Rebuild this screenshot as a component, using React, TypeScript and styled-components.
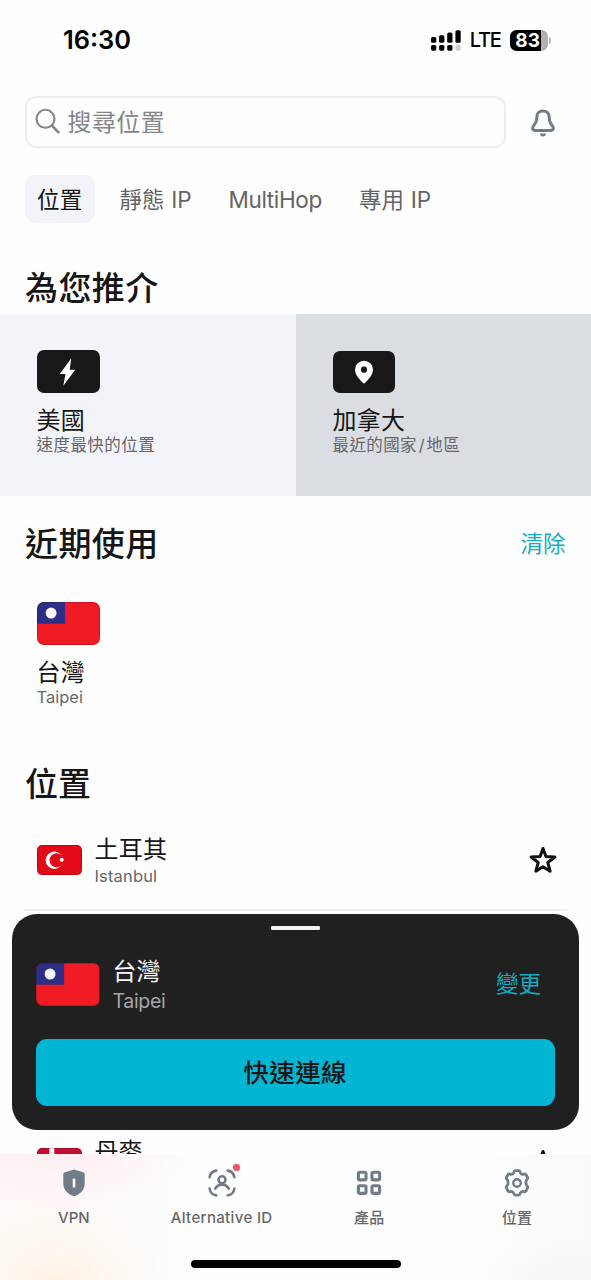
import React from "react";
import styled, { createGlobalStyle } from "styled-components";

const GlobalStyle = createGlobalStyle`
  * { box-sizing: border-box; }
  html, body { margin: 0; background: #fefefe; }
  body { font-family: Inter, "Noto Sans CJK TC", sans-serif; color: #161616; }
`;

const Screen = styled.div`
  position: relative;
  display: flex;
  flex-direction: column;
  width: 591px;
  height: 1280px;
  overflow: hidden;
  background: #fefefe;
`;

const Text = styled.span<{
  $size: number; $line: number; $color?: string; $weight?: number; $track?: number;
}>`
  display: block;
  white-space: nowrap;
  font-size: ${(p) => p.$size}px;
  line-height: ${(p) => p.$line}px;
  color: ${(p) => p.$color ?? "#161616"};
  font-weight: ${(p) => p.$weight ?? 400};
  letter-spacing: ${(p) => p.$track ?? 0}px;
`;

const Slash = styled.span`
  margin: 0 1.3px 0 1.7px;
`;

const StatusBar = styled.header`
  display: flex;
  align-items: center;
  justify-content: space-between;
  height: 80px;
  flex: none;
  padding: 0 40px 0 63px;
`;

const StatusGroup = styled.div`
  display: flex;
  align-items: center;
`;

const Battery = styled.div`
  display: flex;
  align-items: center;
  margin-left: 9px;
`;

const BatteryBody = styled.div`
  display: flex;
  align-items: center;
  justify-content: flex-end;
  width: 38px;
  height: 21px;
  padding-right: 7.5px;
  border-radius: 6.5px;
  background: linear-gradient(90deg, #000 0 31px, #b1b1b1 31px);
`;

const BatteryTip = styled.div`
  width: 2.5px;
  height: 7px;
  margin-left: 1px;
  border-radius: 0 3px 3px 0;
  background: #b8b8b8;
`;

const SearchRow = styled.div`
  display: flex;
  align-items: center;
  flex: none;
  height: 52px;
  margin: 16px 0 27px;
  padding: 0 34px 0 24.5px;
  justify-content: space-between;
  > svg { margin-top: 1px; }
`;

const SearchBox = styled.div`
  display: flex;
  align-items: center;
  gap: 7px;
  width: 481.5px;
  height: 52px;
  padding-left: 8px;
  border: 2px solid #eceef1;
  border-radius: 11px;
  > svg { margin-top: -2px; }
  > span { padding-top: 2px; }
`;

const Filters = styled.nav`
  display: flex;
  flex: none;
  height: 48px;
  padding-left: 25px;
`;

const FilterSlot = styled.div<{ $width: number }>`
  display: flex;
  width: ${(p) => p.$width}px;
`;

const Filter = styled.div<{ $active?: boolean; $width: number }>`
  display: flex;
  align-items: center;
  width: ${(p) => p.$width}px;
  padding-left: 12px;
  border-radius: 11px;
  background: ${(p) => (p.$active ? "#f3f4f9" : "transparent")};
`;

const SectionHead = styled.div<{ $height: number; $top: number }>`
  display: flex;
  flex: none;
  align-items: flex-start;
  justify-content: space-between;
  height: ${(p) => p.$height}px;
  padding: ${(p) => p.$top}px 25.5px 0 25px;
`;

const Suggestions = styled.div`
  display: grid;
  grid-template-columns: 295.5px 1fr;
  flex: none;
  height: 182px;
`;

const Suggestion = styled.div<{ $pressed?: boolean }>`
  padding: 36px 0 0 ${(p) => (p.$pressed ? 37 : 36.5)}px;
  background: ${(p) => (p.$pressed ? "#dadde2" : "#f3f4f9")};
`;

const IconTile = styled.div<{ $small?: boolean }>`
  display: flex;
  align-items: center;
  justify-content: center;
  width: ${(p) => (p.$small ? 62.5 : 63.5)}px;
  height: ${(p) => (p.$small ? 41.5 : 43)}px;
  margin: ${(p) => (p.$small ? "1px 0 13.5px" : "0 0 13px")};
  border-radius: 7px;
  background: #181818;
`;

const Recent = styled.div`
  display: flex;
  flex-direction: column;
  flex: none;
  height: 164px;
  padding: 12px 0 0 36.5px;
`;

const FlagFrame = styled.div<{ $w: number; $h: number; $gap?: number }>`
  flex: none;
  width: ${(p) => p.$w}px;
  height: ${(p) => p.$h}px;
  margin-bottom: ${(p) => p.$gap ?? 0}px;
  border-radius: ${(p) => (p.$w > 50 ? 7 : 5)}px;
  overflow: hidden;
  position: relative;
  svg { display: block; width: 100%; height: 100%; }
  &::after {
    content: "";
    position: absolute;
    inset: 0;
    border: 1.5px solid rgba(40, 0, 0, 0.2);
    border-radius: inherit;
  }
`;

const LocationRow = styled.div<{ $rule?: boolean }>`
  display: flex;
  flex: none;
  align-items: center;
  height: 101px;
  margin: 0 24px;
  padding: 1px 10px 0 12.5px;
  border-bottom: 2px solid ${(p) => (p.$rule ? "#edeef1" : "transparent")};
`;

const Names = styled.div<{ $gap: number; $drop?: number }>`
  flex: 1;
  margin-left: ${(p) => p.$gap}px;
  padding-top: ${(p) => p.$drop ?? 0}px;
`;

const CoveredRows = styled.div`
  flex: none;
  height: 202px;
`;

const ConnectSheet = styled.section`
  position: absolute;
  left: 12.4px;
  top: 914px;
  width: 566.6px;
  height: 216px;
  padding: 12px 24px 24px;
  border-radius: 25px;
  background: #202020;
  display: flex;
  flex-direction: column;
`;

const Handle = styled.div`
  align-self: center;
  width: 49px;
  height: 3.5px;
  border-radius: 1px;
  background: #f0f1f5;
`;

const SheetTarget = styled.div`
  display: flex;
  align-items: center;
  height: 109.5px;
  padding: 0 14px 0 0;
`;

const ConnectButton = styled.div`
  display: flex;
  align-items: center;
  justify-content: center;
  flex: none;
  width: 518.5px;
  height: 66.5px;
  padding: 1px 1px 0 0;
  border-radius: 11px;
  background: #02b5d2;
`;

const TabBar = styled.footer`
  position: absolute;
  left: 0;
  bottom: 0;
  width: 591px;
  height: 126px;
  display: flex;
  flex-direction: column;
  align-items: center;
  background:
    radial-gradient(circle at 58px 150px, rgba(252, 235, 212, 0.9), rgba(255, 244, 232, 0.5) 55px, transparent 115px),
    radial-gradient(ellipse 130px 60px at 62px 0, rgba(255, 234, 239, 0.75), transparent),
    radial-gradient(circle at 555px 160px, #f5f5f5, transparent 85px),
    linear-gradient(90deg, #fffaf9 0, #fdfcfc 150px, #fefefe 240px, #fefefe 450px, #fafafa 100%);
`;

const Tabs = styled.div`
  display: grid;
  grid-template-columns: repeat(4, 1fr);
  width: 591px;
  height: 106px;
`;

const Tab = styled.div`
  display: flex;
  flex-direction: column;
  align-items: center;
  padding-top: 13px;
  svg { display: block; margin-bottom: 8.5px; }
`;

const TabIcon = styled.div`
  position: relative;
`;

const Badge = styled.i`
  position: absolute;
  top: -3px;
  right: -3px;
  width: 6.5px;
  height: 6.5px;
  border-radius: 50%;
  background: #f5566d;
`;

const HomeIndicator = styled.div`
  width: 210.5px;
  height: 8px;
  margin-left: 1px;
  border-radius: 4px;
  background: #000;
`;

const SLATE = "#717c89";

const SignalMark = styled.svg`
  margin-right: 8.5px;
`;

const Signal = () => (
  <SignalMark width="30" height="21" viewBox="0 0 30 21">
    <rect x="0" y="7" width="5.3" height="5.8" rx="1.6" />
    <rect x="8.1" y="5.2" width="5.3" height="7.6" rx="1.6" />
    <rect x="16.2" y="2.4" width="5.3" height="10.4" rx="1.6" />
    <rect x="24.4" y="0.2" width="5.3" height="12.6" rx="1.6" />
    <rect x="0" y="15" width="5.3" height="5.7" rx="1.6" />
    <rect x="8.1" y="15" width="5.3" height="5.7" rx="1.6" />
    <rect x="16.2" y="15" width="5.3" height="5.7" rx="1.6" />
    <rect x="24.4" y="15" width="5.3" height="5.7" rx="1.6" fill="#cfcfcf" />
  </SignalMark>
);

const SearchIcon = () => (
  <svg width="26" height="26" viewBox="0 0 26 26" fill="none" stroke="#85868b" strokeWidth="2.1" strokeLinecap="round">
    <circle cx="10.5" cy="10.8" r="9" />
    <path d="M17 17.5L23.4 24.3" strokeWidth="2.6" />
  </svg>
);

const BellIcon = () => (
  <svg width="28" height="30" viewBox="0 0 28 30" fill="none">
    <path
      d="M14 3c-3.800 0-6.100 2.500-6.100 5.700 0 3.600-.7 5.700-2.500 8-1.300 1.600-1.800 2.300-1.800 3.400 0 1.500 1 2.300 2.500 2.300h15.800c1.500 0 2.500-.8 2.500-2.300 0-1.100-.5-1.800-1.800-3.400-1.800-2.300-2.500-4.400-2.500-8C20.100 5.500 17.800 3 14 3z"
      stroke={SLATE} strokeWidth="3" strokeLinejoin="round"
    />
    <path d="M11 25.400h6c0 1.900-1.200 3-3 3s-3-1.100-3-3z" fill={SLATE} />
  </svg>
);

const BoltIcon = () => (
  <svg width="18" height="30" viewBox="0 0 18 30">
    <path d="M12.3 1.2L.8 17h5.7L4.3 28.8 16.3 12.8h-5.6z" fill="#fff" />
  </svg>
);

const PinIcon = () => (
  <svg width="20" height="24" viewBox="0 0 20 24">
    <path
      d="M10 .7a9 9 0 0 1 9 9c0 5-4.6 9.700-7.800 13a1.600 1.600 0 0 1-2.400 0C5.600 19.400 1 14.700 1 9.700a9 9 0 0 1 9-9zm0 5.900a3.100 3.100 0 1 0 0 6.200 3.100 3.100 0 0 0 0-6.200z"
      fill="#fff" fillRule="evenodd"
    />
  </svg>
);

const StarIcon = () => (
  <svg width="28" height="28" viewBox="0 0 28 28" fill="none" stroke="#111" strokeWidth="3" strokeLinejoin="round">
    <path d="M14 2.500l2.900 8 9 .5-7.100 5.500 2.300 8.700L14 20.800l-7.100 4.400 2.300-8.700L2.100 11l9-.5z" />
  </svg>
);

const TaiwanFlag = () => (
  <svg viewBox="0 0 64 43" preserveAspectRatio="none">
    <rect width="64" height="43" fill="#ef1c25" />
    <rect width="28.3" height="21.7" fill="#2c2e87" />
    <circle cx="14.2" cy="11.1" r="5.5" fill="#f7f7fa" />
  </svg>
);

const TurkeyFlag = () => (
  <svg viewBox="0 0 46 31" preserveAspectRatio="none">
    <rect width="46" height="31" fill="#e30a17" />
    <circle cx="17.5" cy="15.5" r="8.8" fill="#fff" />
    <circle cx="19.8" cy="15.5" r="7.1" fill="#e30a17" />
    <circle cx="25" cy="15" r="2" fill="#fff" />
  </svg>
);

const DenmarkFlag = () => (
  <svg viewBox="0 0 46 31" preserveAspectRatio="none">
    <rect width="46" height="31" fill="#c60c30" />
    <path d="M12.500 0h5v31h-5zM0 13h46v5H0z" fill="#fff" />
  </svg>
);

const ShieldIcon = () => (
  <svg width="30" height="32" viewBox="0 0 30 32">
    <path d="M15 2.600l9 2.600c1.200.4 1.700 1.100 1.700 2.200v9c0 5.500-3.500 10-9.800 12.500a2.400 2.400 0 0 1-1.800 0C7.800 26.400 4.300 21.900 4.300 16.400v-9c0-1.100.5-1.800 1.700-2.200z" fill={SLATE} />
    <rect x="13.700" y="11.600" width="2.600" height="8.800" rx="1" fill="#fff" />
  </svg>
);

const IdIcon = () => (
  <svg width="30" height="32" viewBox="0 0 30 32" fill="none" stroke={SLATE} strokeWidth="2.600" strokeLinecap="round">
    <path d="M2.600 10.200C3.200 6.600 5.400 4.200 9.200 3.600M20.800 3.600c3.800.6 6 3 6.600 6.600M27.400 21.600c-.6 3.800-2.800 6.200-6.600 6.800M9.200 28.400c-3.800-.6-6-3-6.600-6.800" />
    <circle cx="15" cy="12.800" r="3.500" />
    <path d="M8.200 21.700c1.500-2.700 3.900-4.100 6.800-4.100s5.300 1.400 6.800 4.100" />
  </svg>
);

const GridIcon = () => (
  <svg width="30" height="32" viewBox="0 0 30 32" fill="none" stroke={SLATE} strokeWidth="3.100">
    <rect x="4.400" y="5.300" width="7.600" height="7.600" rx="1.300" />
    <rect x="18" y="5.300" width="7.600" height="7.600" rx="1.300" />
    <rect x="4.400" y="18.800" width="7.600" height="7.600" rx="1.300" />
    <rect x="18" y="18.800" width="7.600" height="7.600" rx="1.300" />
  </svg>
);

const GearIcon = () => (
  <svg width="30" height="32" viewBox="0 0 30 32" fill="none" stroke={SLATE} strokeWidth="2.800" strokeLinejoin="round">
    <path d="M13.400 3.700h3.200c.9 0 1.300.4 1.500 1.300.4 1.900 1.900 2.700 3.700 2.100 1-.3 1.700-.2 2.200.6l1.500 2.500c.5.800.3 1.400-.4 2.100-1.600 1.400-1.600 5.200 0 6.600.7.700.9 1.300.4 2.100L24 24.100c-.5.800-1.200.9-2.200.6-1.800-.6-3.300.3-3.700 2.100-.2.900-.6 1.300-1.500 1.300h-3.200c-.9 0-1.300-.4-1.500-1.300-.4-1.800-1.900-2.700-3.700-2.100-1 .3-1.700.2-2.200-.6L4.500 21c-.5-.8-.3-1.400.4-2.100 1.600-1.400 1.600-5.200 0-6.600-.7-.7-.9-1.300-.4-2.100L6 7.700c.5-.8 1.200-.9 2.200-.6 1.800.6 3.300-.2 3.700-2.100.2-.9.600-1.300 1.500-1.300z" />
    <circle cx="15" cy="16" r="3.700" strokeWidth="2.400" />
  </svg>
);

const filters = [
  { label: "位置", width: 82.5, track: 0.3 },
  { label: "靜態 IP", width: 109, track: 0.1 },
  { label: "MultiHop", width: 130.5, track: -0.35 },
  { label: "專用 IP", width: 96, track: 0.1 },
];

const tabs = [
  { label: "VPN", icon: <ShieldIcon />, track: 0 },
  { label: "Alternative ID", icon: <IdIcon />, track: 0.35, badge: true },
  { label: "產品", icon: <GridIcon />, track: 0.3 },
  { label: "位置", icon: <GearIcon />, track: 0.3 },
];

export default function App() {
  return (
    <Screen>
      <GlobalStyle />
      <StatusBar>
        <Text $size={25.4} $line={30} $weight={600} $color="#000">16:30</Text>
        <StatusGroup>
          <Signal />
          <Text $size={20} $line={22} $weight={500} $color="#000" $track={-1.3}>LTE</Text>
          <Battery>
            <BatteryBody>
              <Text $size={19} $line={21} $weight={700} $color="#fff">83</Text>
            </BatteryBody>
            <BatteryTip />
          </Battery>
        </StatusGroup>
      </StatusBar>

      <SearchRow>
        <SearchBox>
          <SearchIcon />
          <Text $size={24} $line={32} $color="#85868b" $track={0.4}>搜尋位置</Text>
        </SearchBox>
        <BellIcon />
      </SearchRow>

      <Filters>
        {filters.map((f, i) => (
          <FilterSlot key={f.label} $width={f.width}>
            <Filter $active={i === 0} $width={i === 0 ? 70 : f.width}>
              <Text $size={22.5} $line={31} $color={i === 0 ? "#161616" : "#636467"} $track={f.track}>
                {f.label}
              </Text>
            </Filter>
          </FilterSlot>
        ))}
      </Filters>

      <SectionHead $height={91} $top={43}>
        <Text $size={33} $line={44} $weight={500} $track={0.4}>為您推介</Text>
      </SectionHead>
      <Suggestions>
        <Suggestion>
          <IconTile><BoltIcon /></IconTile>
          <Text $size={24} $line={29} $track={0.3}>美國</Text>
          <Text $size={16.5} $line={21} $color="#66676a" $track={0.45}>速度最快的位置</Text>
        </Suggestion>
        <Suggestion $pressed>
          <IconTile $small><PinIcon /></IconTile>
          <Text $size={24} $line={29} $track={0.3}>加拿大</Text>
          <Text $size={16.5} $line={21} $color="#66676a" $track={0.4}>
            最近的國家<Slash>/</Slash>地區
          </Text>
        </Suggestion>
      </Suggestions>

      <SectionHead $height={94} $top={26}>
        <Text $size={33} $line={44} $weight={500} $track={0.4}>近期使用</Text>
        <Text $size={22.5} $line={44} $color="#15abc3">清除</Text>
      </SectionHead>
      <Recent>
        <FlagFrame $w={63.5} $h={43} $gap={13}><TaiwanFlag /></FlagFrame>
        <Text $size={24} $line={29} $track={0.2}>台灣</Text>
        <Text $size={16.5} $line={21} $color="#66676a">Taipei</Text>
      </Recent>

      <SectionHead $height={56} $top={8}>
        <Text $size={33} $line={44} $weight={500}>位置</Text>
      </SectionHead>
      <LocationRow $rule>
        <FlagFrame $w={45.5} $h={30.5}><TurkeyFlag /></FlagFrame>
        <Names $gap={12.5} $drop={3}>
          <Text $size={24} $line={29.5} $track={0.3}>土耳其</Text>
          <Text $size={16.5} $line={24} $color="#66676a" $track={0.15}>Istanbul</Text>
        </Names>
        <StarIcon />
      </LocationRow>
      <CoveredRows />
      <LocationRow>
        <FlagFrame $w={45.5} $h={30.5}><DenmarkFlag /></FlagFrame>
        <Names $gap={12.5} $drop={2}>
          <Text $size={24} $line={29.5}>丹麥</Text>
          <Text $size={16.5} $line={24}>&nbsp;</Text>
        </Names>
        <StarIcon />
      </LocationRow>

      <ConnectSheet>
        <Handle />
        <SheetTarget>
          <FlagFrame $w={63.5} $h={43}><TaiwanFlag /></FlagFrame>
          <Names $gap={12.5} $drop={3}>
            <Text $size={24} $line={31} $color="#f3f4f9">台灣</Text>
            <Text $size={19.5} $line={28} $color="#a5a6a9" $track={-0.3}>Taipei</Text>
          </Names>
          <Text $size={22.5} $line={36} $color="#15abc3">變更</Text>
        </SheetTarget>
        <ConnectButton>
          <Text $size={25.5} $line={35} $weight={500} $track={0.4}>快速連線</Text>
        </ConnectButton>
      </ConnectSheet>

      <TabBar>
        <Tabs>
          {tabs.map((t, i) => (
            <Tab key={i}>
              <TabIcon>
                {t.icon}
                {t.badge && <Badge />}
              </TabIcon>
              <Text $size={15} $line={20} $weight={i < 2 ? 450 : 500} $color="#66676a" $track={t.track}>
                {t.label}
              </Text>
            </Tab>
          ))}
        </Tabs>
        <HomeIndicator />
      </TabBar>
    </Screen>
  );
}
